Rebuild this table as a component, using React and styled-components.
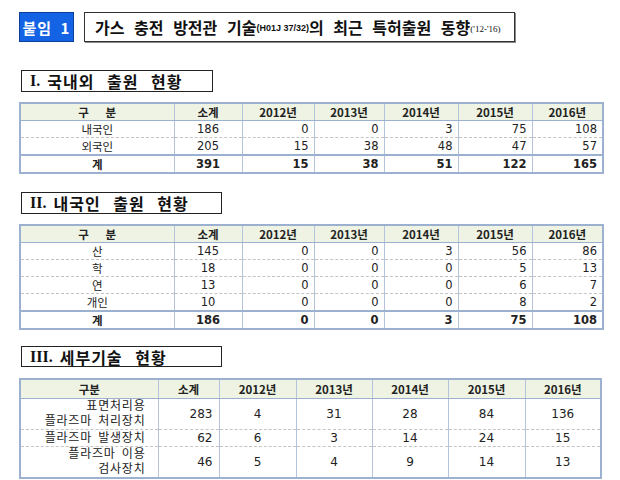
import React from 'react';
import styled, { createGlobalStyle } from 'styled-components';

const Global = createGlobalStyle`
  body {
    margin: 0;
    background: #fff;
    font-family: "Noto Sans CJK KR", "DejaVu Sans", sans-serif;
    color: #222;
  }
`;

const Page = styled.div`
  width: 620px;
  height: 480px;
  padding: 12px 18px 0 19px;
  box-sizing: border-box;
  display: flex;
  flex-direction: column;
`;

const Header = styled.div`
  display: flex;
  align-items: stretch;
  gap: 10px;
  height: 30px;
`;

const Badge = styled.div`
  width: 55px;
  background: #1363e4;
  border: 1px solid #0b3f99;
  box-sizing: border-box;
  color: #fff;
  font-weight: 700;
  font-size: 15px;
  display: flex;
  align-items: center;
  justify-content: center;
  letter-spacing: 1px;
  word-spacing: 4px;
`;

const TitleBox = styled.div`
  width: 431px;
  border: 1px solid #333;
  box-shadow: 1px 1px 0 #888;
  box-sizing: border-box;
  display: flex;
  align-items: center;
  padding-left: 10px;
  font-weight: 700;
  font-size: 16px;
  color: #111;
  word-spacing: 6px;
  white-space: pre;
`;

const Small = styled.span`
  font-size: 9px;
  font-family: "Liberation Sans", sans-serif;
  font-weight: 700;
  word-spacing: 0;
  margin-top: 2px;
`;

const Tiny = styled.span`
  font-size: 9px;
  font-family: "Liberation Serif", serif;
  font-weight: 400;
  word-spacing: 0;
  margin-top: 3px;
`;

const Heading = styled.div`
  margin-top: ${p => p.$top}px;
  margin-left: 2px;
  width: ${p => p.$w}px;
  height: ${p => p.$h || 22}px;
  border: 1.5px solid #222;
  box-sizing: border-box;
  display: flex;
  align-items: center;
  padding-left: 8px;
  font-weight: 700;
  font-size: 16px;
  color: #111;
  word-spacing: 8px;
  letter-spacing: 1px;
  white-space: pre;
`;

const Num = styled.span`
  font-family: "Liberation Serif", serif;
  font-weight: 700;
  font-size: 16px;
  margin-right: 7px;
  letter-spacing: 0;
`;

const Table = styled.table`
  margin-top: ${p => p.$top}px;
  border-collapse: collapse;
  table-layout: fixed;
  width: ${p => p.$w}px;
  border: 2px solid #9cb1d0;
  font-size: ${p => p.$fs || 11.5}px;
  color: #222;
`;

const Th = styled.th`
  background: #eef3e3;
  height: ${p => p.$h || 16}px;
  padding: 0;
  font-weight: 700;
  font-size: 11.5px;
  border-left: 1px solid #b3c4dc;
  border-bottom: 1px solid #9cb1d0;
  text-align: center;
  word-spacing: ${p => p.$ws || 0}px;
`;

const Td = styled.td`
  height: ${p => p.$h || 16}px;
  padding: 0 ${p => p.$pad ?? 5}px;
  line-height: ${p => p.$lh || 16}px;
  border-left: 1px solid #b3c4dc;
  border-top: ${p => (p.$total ? '2px solid #9cb1d0' : '1px dashed #c4c4c4')};
  text-align: ${p => p.$align || 'right'};
  font-weight: ${p => (p.$total ? 700 : 400)};
  font-family: ${p => (p.$num ? '"DejaVu Sans", sans-serif' : 'inherit')};
  white-space: nowrap;
`;

const LabelCell = styled(Td)`
  font-family: "Liberation Sans", "Noto Sans CJK KR", sans-serif;
  font-size: 12px;
  letter-spacing: 0.8px;
  word-spacing: 2px;
`;

const years = ['2012년', '2013년', '2014년', '2015년', '2016년'];

const t1 = [
  ['내국인', 186, 0, 0, 3, 75, 108],
  ['외국인', 205, 15, 38, 48, 47, 57],
];
const t1Total = ['계', 391, 15, 38, 51, 122, 165];

const t2 = [
  ['산', 145, 0, 0, 3, 56, 86],
  ['학', 18, 0, 0, 0, 5, 13],
  ['연', 13, 0, 0, 0, 6, 7],
  ['개인', 10, 0, 0, 0, 8, 2],
];
const t2Total = ['계', 186, 0, 0, 3, 75, 108];

const t3 = [
  [['표면처리용', '플라즈마 처리장치'], 283, 4, 31, 28, 84, 136],
  [['플라즈마 발생장치'], 62, 6, 3, 14, 24, 15],
  [['플라즈마 이용', '검사장치'], 46, 5, 4, 9, 14, 13],
];

const cols12 = [154, 68, 72, 70, 74, 74, 71];
const cols3 = [138, 61, 77, 76, 76, 77, 76];

function Cols({ widths }) {
  return (
    <colgroup>
      {widths.map((w, i) => <col key={i} style={{ width: w }} />)}
    </colgroup>
  );
}

function SimpleTable({ top, rows, total }) {
  const line = (r, isTotal, k) => (
    <tr key={k}>
      <Td $align="center" $total={isTotal}>{r[0]}</Td>
      <Td $align="center" $num $total={isTotal}>{r[1]}</Td>
      {r.slice(2).map((v, i) => <Td key={i} $num $total={isTotal}>{v}</Td>)}
    </tr>
  );
  return (
    <Table $top={top} $w={583}>
      <Cols widths={cols12} />
      <thead>
        <tr>
          <Th $ws={14}>구 분</Th>
          <Th>소계</Th>
          {years.map(y => <Th key={y}>{y}</Th>)}
        </tr>
      </thead>
      <tbody>
        {rows.map((r, i) => line(r, false, i))}
        {line(total, true, 'total')}
      </tbody>
    </Table>
  );
}

export default function App() {
  return (
    <>
      <Global />
      <Page>
        <Header>
          <Badge>붙임 1</Badge>
          <TitleBox>
            가스 충전 방전관 기술<Small>(H01J 37/32)</Small>의 최근 특허출원 동향<Tiny>('12-'16)</Tiny>
          </TitleBox>
        </Header>

        <Heading $top={28} $w={192}><Num>I.</Num>국내외 출원 현황</Heading>
        <SimpleTable top={10} rows={t1} total={t1Total} />

        <Heading $top={18} $w={201}><Num>II.</Num>내국인 출원 현황</Heading>
        <SimpleTable top={10} rows={t2} total={t2Total} />

        <Heading $top={16} $w={201} $h={21}><Num>III.</Num>세부기술 현황</Heading>
        <Table $top={11} $w={581} $fs={12}>
          <Cols widths={cols3} />
          <thead>
            <tr>
              <Th $h={18}>구분</Th>
              <Th>소계</Th>
              {years.map(y => <Th key={y}>{y}</Th>)}
            </tr>
          </thead>
          <tbody>
            {t3.map((r, i) => (
              <tr key={i}>
                <LabelCell $pad={12} $lh={r[0].length > 1 ? 15 : 13} $h={r[0].length > 1 ? 30 : 13}>
                  {r[0].map((l, j) => <div key={j}>{l}</div>)}
                </LabelCell>
                <Td $num $pad={6}>{r[1]}</Td>
                {r.slice(2).map((v, j) => <Td key={j} $num $align="center">{v}</Td>)}
              </tr>
            ))}
          </tbody>
        </Table>
      </Page>
    </>
  );
}
